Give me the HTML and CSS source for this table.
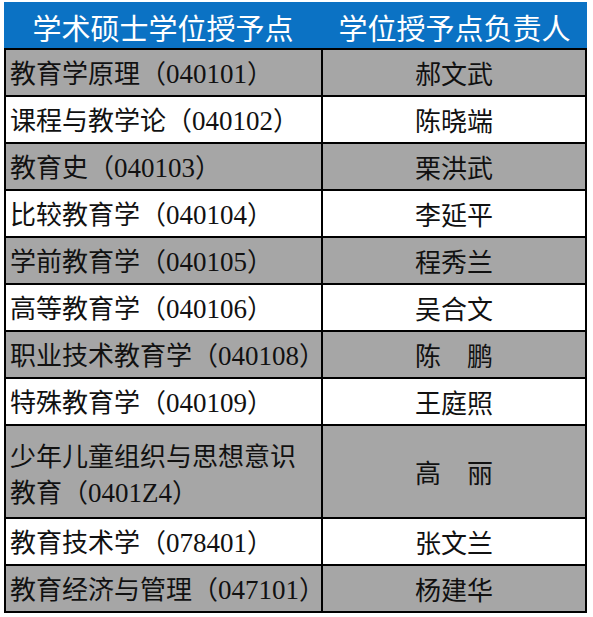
FILE: index.html
```html
<!DOCTYPE html>
<html>
<head>
<meta charset="utf-8">
<link rel="stylesheet" href="styles.css">
</head>
<body>
<div class="table">
  <div class="head">
    <div class="hcell">学术硕士学位授予点</div>
    <div class="hcell">学位授予点负责人</div>
  </div>
  <div class="row gray"><div class="c1"><div class="txt">教育学原理（<span class="num">040101</span>）</div></div><div class="c2">郝文武</div></div>
  <div class="row"><div class="c1"><div class="txt">课程与教学论（<span class="num">040102</span>）</div></div><div class="c2">陈晓端</div></div>
  <div class="row gray"><div class="c1"><div class="txt">教育史（<span class="num">040103</span>）</div></div><div class="c2">栗洪武</div></div>
  <div class="row"><div class="c1"><div class="txt">比较教育学（<span class="num">040104</span>）</div></div><div class="c2">李延平</div></div>
  <div class="row gray"><div class="c1"><div class="txt">学前教育学（<span class="num">040105</span>）</div></div><div class="c2">程秀兰</div></div>
  <div class="row"><div class="c1"><div class="txt">高等教育学（<span class="num">040106</span>）</div></div><div class="c2">吴合文</div></div>
  <div class="row gray"><div class="c1"><div class="txt">职业技术教育学（<span class="num">040108</span>）</div></div><div class="c2">陈　鹏</div></div>
  <div class="row"><div class="c1"><div class="txt">特殊教育学（<span class="num">040109</span>）</div></div><div class="c2">王庭照</div></div>
  <div class="row gray tall"><div class="c1"><div class="txt">少年儿童组织与思想意识<br>教育（<span class="num">0401Z4</span>）</div></div><div class="c2">高　丽</div></div>
  <div class="row"><div class="c1"><div class="txt">教育技术学（<span class="num">078401</span>）</div></div><div class="c2">张文兰</div></div>
  <div class="row gray"><div class="c1"><div class="txt">教育经济与管理（<span class="num">047101</span>）</div></div><div class="c2">杨建华</div></div>
</div>
</body>
</html>
```
FILE: styles.css
```css
html, body {
  margin: 0;
  padding: 0;
  background: #ffffff;
}

body {
  font-family: "Noto Sans CJK SC", sans-serif;
  color: #111111;
}

.table {
  margin: 2px 0 0 4px;
  width: 583px;
}

.head {
  display: grid;
  grid-template-columns: 318px 265px;
  height: 48px;
  box-sizing: border-box;
  background: #0b72c4;
  border-bottom: 2px solid #000000;
}

.hcell {
  display: flex;
  align-items: center;
  justify-content: center;
  color: #ffffff;
  font-size: 29px;
  padding-top: 3px;
  box-sizing: border-box;
}

.row {
  display: grid;
  grid-template-columns: 317px 1fr;
  height: 47px;
  box-sizing: border-box;
  border-left: 2px solid #000000;
  border-right: 2px solid #000000;
  border-bottom: 2px solid #000000;
  background: #ffffff;
  font-size: 26px;
}

.row.gray {
  background: #a6a6a6;
}

.row.tall {
  height: 93px;
}

.c1 {
  display: flex;
  align-items: center;
  padding-left: 4px;
  padding-top: 1px;
  border-right: 2px solid #000000;
  box-sizing: border-box;
  white-space: nowrap;
}

.txt {
  line-height: 36px;
}

.row.tall .c1 {
  padding-top: 5px;
}

.num {
  font-family: "Times New Roman", "Liberation Serif", "DejaVu Serif", serif;
  font-size: 27px;
}

.c2 {
  display: flex;
  align-items: center;
  justify-content: center;
}
```
